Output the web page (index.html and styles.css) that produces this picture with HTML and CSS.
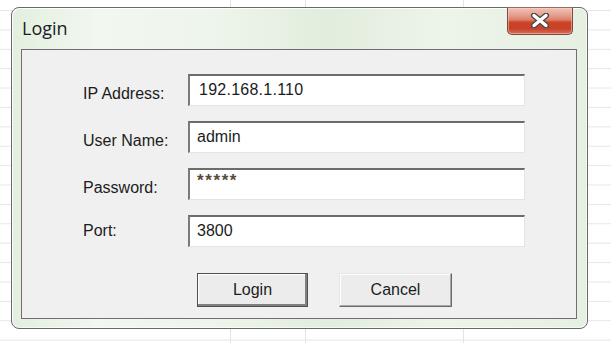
FILE: index.html
```html
<!DOCTYPE html>
<html>
<head>
<meta charset="utf-8">
<link rel="stylesheet" href="styles.css">
</head>
<body>
<div class="window">
  <div class="titlebar">
    <span class="title">Login</span>
    <div class="close">
      <svg width="20" height="15" viewBox="0 0 20 15">
        <path d="M4 2.5 L16 12.5 M16 2.5 L4 12.5" stroke="#4a4a4a" stroke-width="6" stroke-linecap="round"/>
        <path d="M4 2.5 L16 12.5 M16 2.5 L4 12.5" stroke="#ffffff" stroke-width="3.4" stroke-linecap="round"/>
      </svg>
    </div>
  </div>
  <div class="panel">
    <div class="form">
      <label class="label">IP Address:</label>
      <div class="field field-ip">192.168.1.110</div>
      <label class="label">User Name:</label>
      <div class="field">admin</div>
      <label class="label">Password:</label>
      <div class="field field-pass">*****</div>
      <label class="label label-port">Port:</label>
      <div class="field">3800</div>
    </div>
    <div class="buttons">
      <div class="btn btn-default">Login</div>
      <div class="btn">Cancel</div>
    </div>
  </div>
</div>
</body>
</html>
```

FILE: styles.css
```css
html, body {
  margin: 0;
  padding: 0;
}
body {
  width: 611px;
  height: 343px;
  overflow: hidden;
  background-color: #ffffff;
  background-image:
    linear-gradient(to right, transparent 230px, #e4e4e4 230px, #e4e4e4 231px, transparent 231px),
    linear-gradient(to right, transparent 305px, #e4e4e4 305px, #e4e4e4 306px, transparent 306px),
    linear-gradient(to right, transparent 463px, #e4e4e4 463px, #e4e4e4 464px, transparent 464px),
    linear-gradient(to bottom, #e6e6e6 0, #e6e6e6 1px, transparent 1px);
  background-size: 100% 100%, 100% 100%, 100% 100%, 100% 19.4px;
  background-position: 0 0, 0 0, 0 0, 0 10px;
  background-repeat: no-repeat, no-repeat, no-repeat, repeat;
  font-family: "Liberation Sans", Arial, sans-serif;
  color: #1c1c1c;
  padding: 7px 0 0 11px;
  box-sizing: border-box;
}
.window {
  width: 577px;
  height: 322px;
  box-sizing: border-box;
  border: 1px solid #6a6a6a;
  border-radius: 8px;
  background: linear-gradient(to right, #e3efdf 0%, #f2f7f0 15%, #eef5ec 35%, #e2eddd 55%, #edf4ea 75%, #e6f0e2 100%);
  box-shadow: inset 1px 1px 0 rgba(255,255,255,0.85), inset -1px -1px 0 rgba(255,255,255,0.6);
  padding: 0 10px 9px 9px;
  display: flex;
  flex-direction: column;
}
.titlebar {
  height: 41px;
  display: flex;
  justify-content: space-between;
  align-items: flex-start;
  flex: none;
}
.title {
  font-family: "Open Sans", "Noto Sans", sans-serif;
  font-size: 18px;
  color: #1b1b25;
  padding-left: 1px;
  margin-top: 8px;
}
.close {
  width: 66px;
  height: 28px;
  margin-top: -1px;
  margin-right: 4px;
  box-sizing: border-box;
  border: 1px solid #7a4a42;
  border-top-color: #9a6a60;
  border-radius: 0 0 5px 5px;
  background: linear-gradient(to bottom, #efc2b5 0%, #e5a392 25%, #dc806a 45%, #cd4326 55%, #c8412a 80%, #d8705a 100%);
  box-shadow: inset 0 0 0 1px rgba(255,220,210,0.45);
  display: flex;
  align-items: center;
  justify-content: center;
}
.close svg {
  display: block;
  margin-top: -1px;
}
.panel {
  flex: 1;
  box-sizing: border-box;
  border: 1px solid #6f6f6f;
  background: #f0f0f0;
  padding: 24px 0 0 61px;
}
.form {
  display: grid;
  grid-template-columns: 105px 337px;
  grid-auto-rows: 32px;
  row-gap: 15px;
}
.label {
  font-size: 16px;
  align-self: center;
  padding-top: 7px;
}
.label-port {
  padding-top: 0;
}
.field {
  box-sizing: border-box;
  background: #ffffff;
  border-style: solid;
  border-width: 2px 1px 1px 2px;
  border-color: #6c6c6c #e4e4e4 #e4e4e4 #7a7a7a;
  font-size: 16px;
  display: flex;
  align-items: center;
  padding-left: 7px;
  padding-bottom: 2px;
}
.field-ip {
  letter-spacing: 0.25px;
  padding-left: 9px;
}
.field-pass {
  align-items: flex-start;
  padding-top: 1px;
  font-size: 17px;
  font-weight: bold;
  color: #5a4a3a;
  letter-spacing: 1.6px;
}
.buttons {
  display: flex;
  gap: 31px;
  margin-top: 26px;
  padding-left: 114px;
}
.btn {
  width: 113px;
  height: 34px;
  box-sizing: border-box;
  background: #ececec;
  border: 1px solid;
  border-color: #e6e6e6 #6a6a6a #6a6a6a #e6e6e6;
  box-shadow: inset -1px -1px 0 #a8a8a8, inset 1px 1px 0 #ffffff;
  font-size: 16px;
  display: flex;
  align-items: center;
  justify-content: center;
  padding-bottom: 1px;
}
.btn-default {
  width: 111px;
  border: 1px solid #505050;
  box-shadow: inset -2px -2px 0 #808080, inset 1px 1px 0 #ffffff;
}
```
